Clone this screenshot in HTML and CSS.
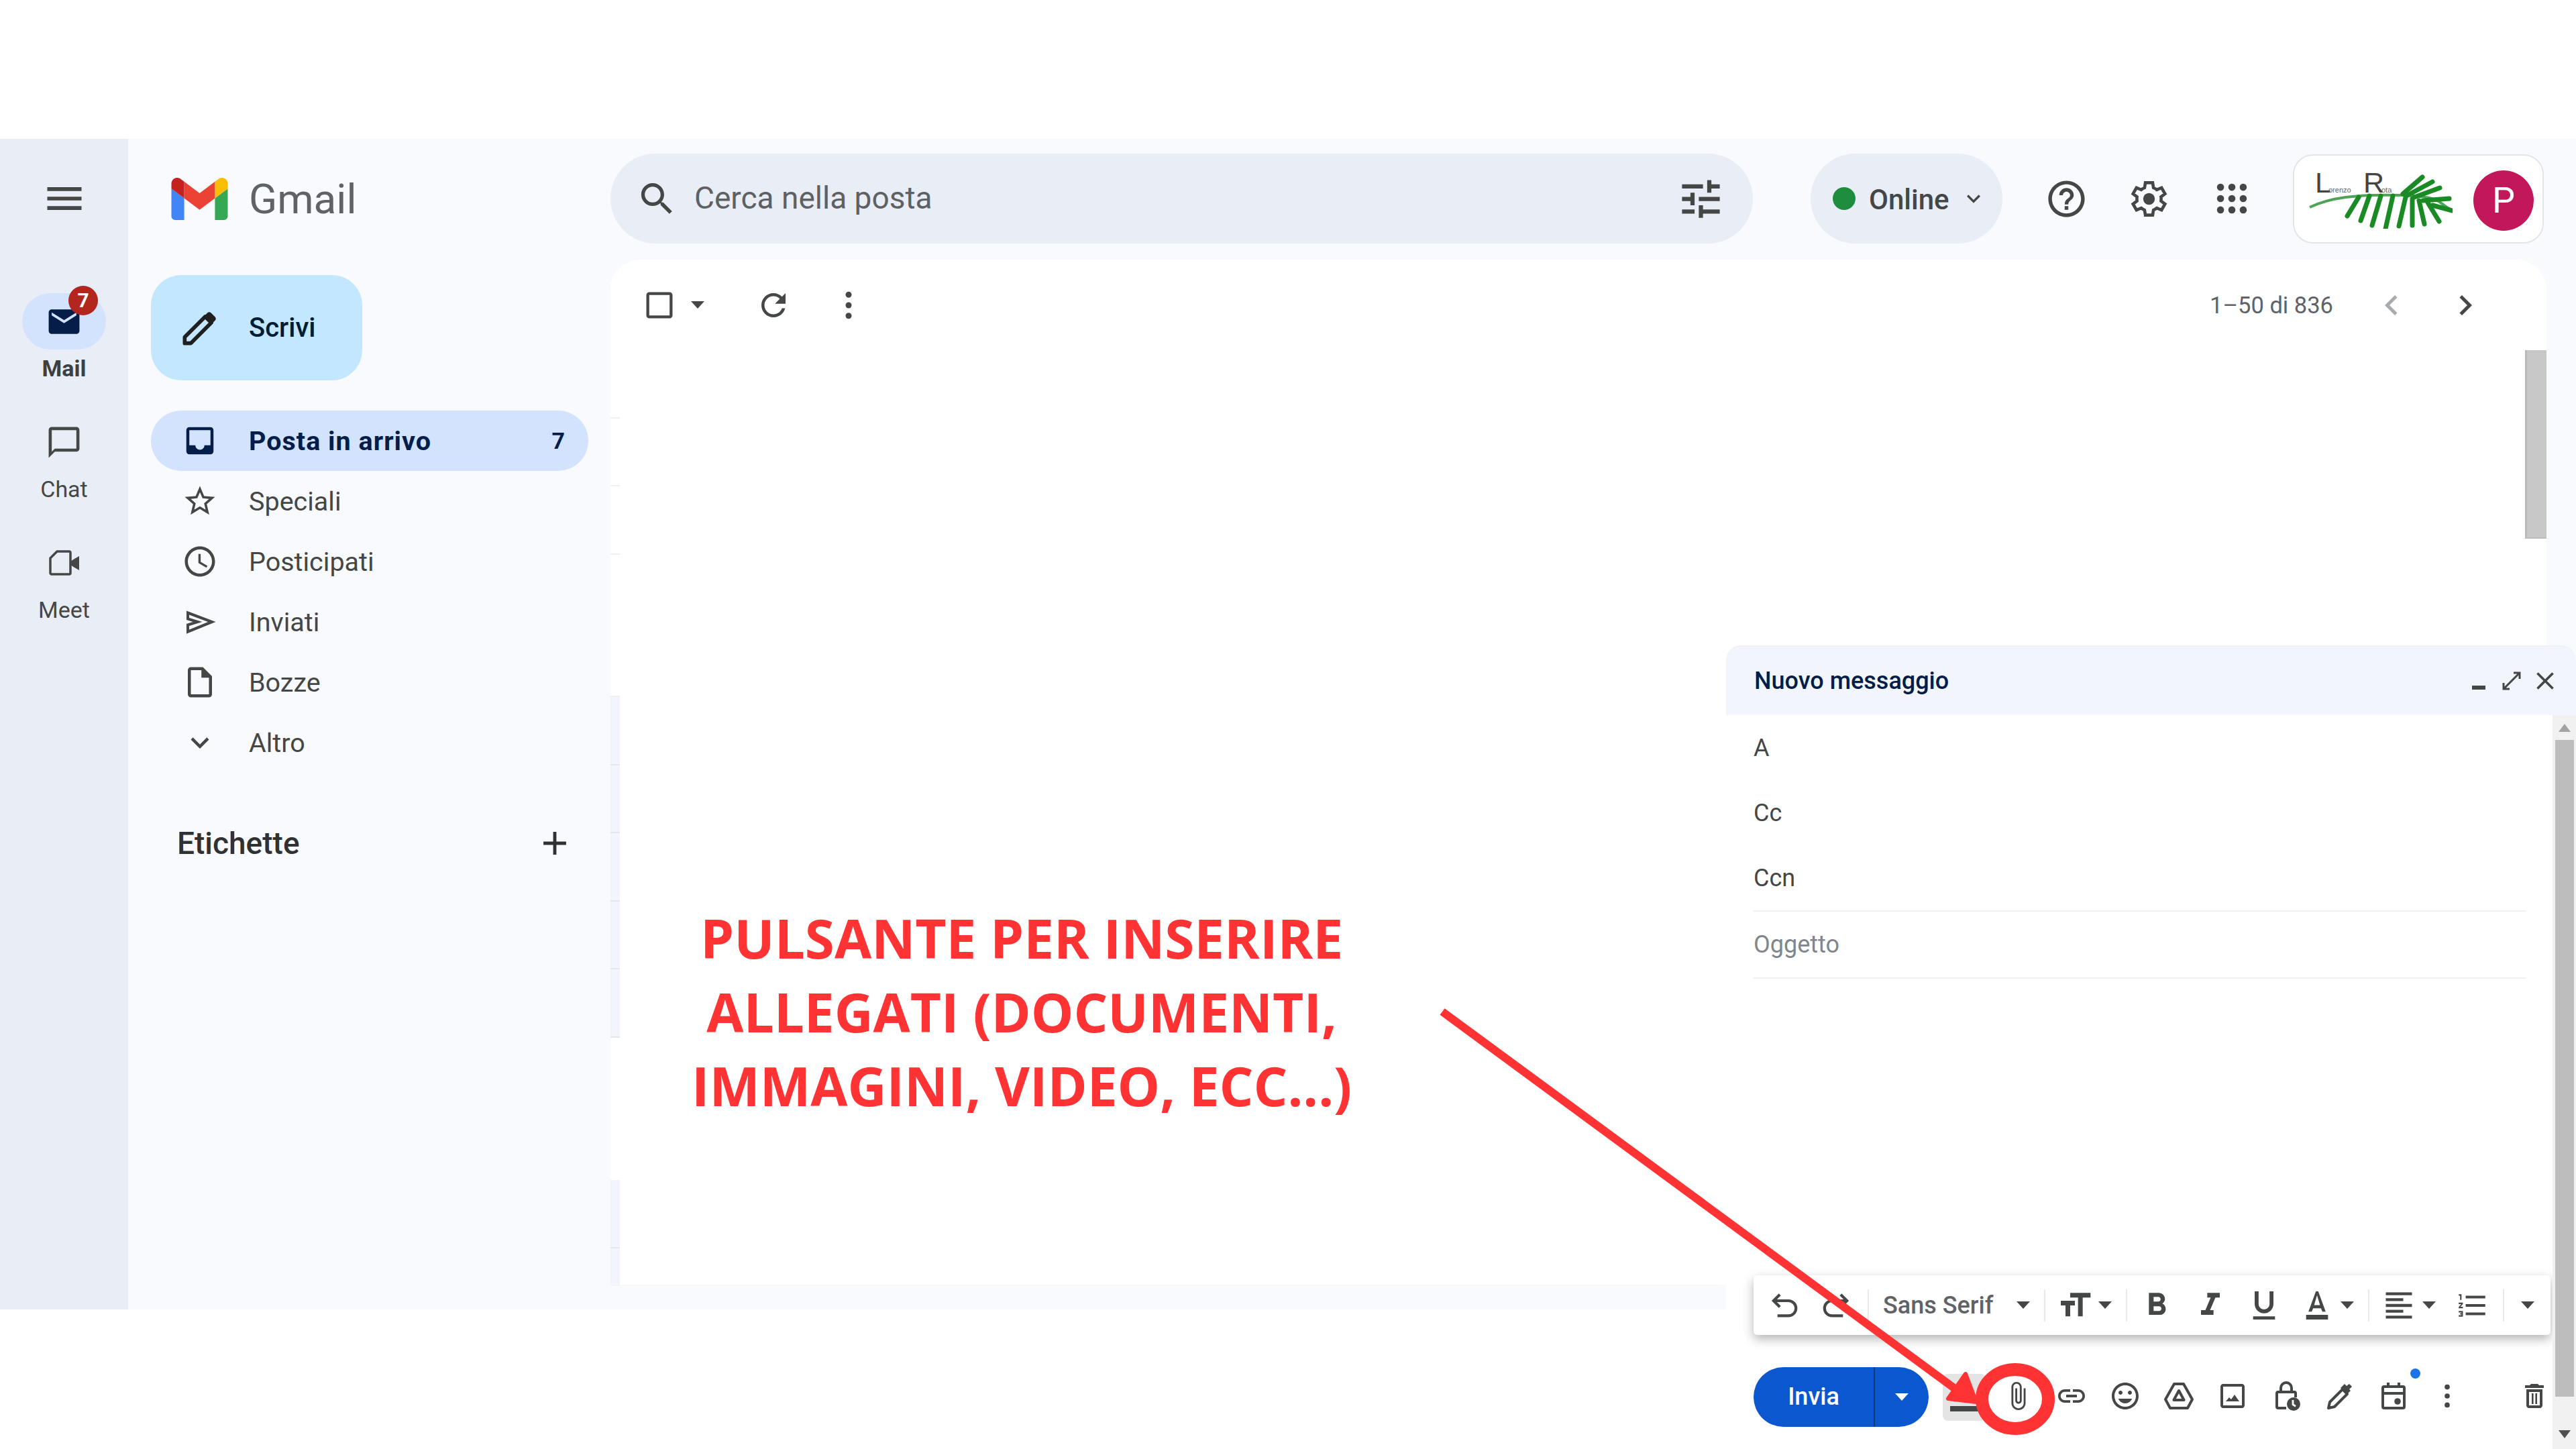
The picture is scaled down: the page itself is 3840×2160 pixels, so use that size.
FILE: index.html
```html
<!DOCTYPE html>
<html lang="it">
<head>
    <meta charset="UTF-8">
    <meta name="viewport" content="width=device-width, initial-scale=1.0">
    <title>Gmail</title>
    <link rel="stylesheet" href="styles.css">
</head>
<body>
<svg class="defs" xmlns="http://www.w3.org/2000/svg">
    <symbol id="ic-menu" viewBox="0 0 24 24"><path d="M3 18h18v-2H3v2zm0-5h18v-2H3v2zm0-7v2h18V6H3z"/></symbol>
    <symbol id="ic-mail" viewBox="0 0 24 24"><path d="M20 4H4c-1.1 0-2 .9-2 2v12c0 1.1.9 2 2 2h16c1.1 0 2-.9 2-2V6c0-1.1-.9-2-2-2zm0 4l-8 5-8-5V6l8 5 8-5v2z"/></symbol>
    <symbol id="ic-chat" viewBox="0 0 24 24"><path d="M20 2H4c-1.1 0-2 .9-2 2v18l4-4h14c1.1 0 2-.9 2-2V4c0-1.1-.9-2-2-2zm0 14H6l-2 2V4h16v12z"/></symbol>
    <symbol id="ic-meet" viewBox="0 0 46 38"><path fill="none" stroke="currentColor" stroke-width="3.500" stroke-linejoin="round" d="M12 2H30a2 2 0 0 1 2 2V34a2 2 0 0 1-2 2H4a2 2 0 0 1-2-2V12z"/><path d="M32 17l6-4 7-4V30l-7-4-6-4z"/></symbol>
    <symbol id="ic-edit" viewBox="0 0 24 24"><path fill="none" stroke="currentColor" stroke-width="2" stroke-linejoin="round" d="M4 20v-3.200L14.800 6l3.200 3.200L7.200 20z"/><path d="M13.800 6.200 16 4c.5-.5 1.300-.5 1.800 0l2.200 2.200c.5.5.5 1.300 0 1.800l-2.200 2.200z"/></symbol>
    <symbol id="ic-inbox" viewBox="0 0 24 24"><path d="M19 3H5c-1.1 0-2 .9-2 2v14c0 1.1.9 2 2 2h14c1.1 0 2-.9 2-2V5c0-1.1-.9-2-2-2zm0 12h-4c0 1.66-1.34 3-3 3s-3-1.34-3-3H5V5h14v10z"/></symbol>
    <symbol id="ic-star" viewBox="0 0 24 24"><path d="M22 9.24l-7.19-.62L12 2 9.19 8.63 2 9.24l5.46 4.73L5.82 21 12 17.27 18.18 21l-1.63-7.03L22 9.24zM12 15.4l-3.76 2.27 1-4.28-3.32-2.88 4.38-.38L12 6.1l1.71 4.04 4.38.38-3.32 2.88 1 4.28L12 15.4z"/></symbol>
    <symbol id="ic-clock" viewBox="0 0 24 24"><path d="M11.99 2C6.47 2 2 6.48 2 12s4.47 10 9.99 10C17.52 22 22 17.52 22 12S17.52 2 11.99 2zM12 20c-4.42 0-8-3.58-8-8s3.58-8 8-8 8 3.58 8 8-3.58 8-8 8zm.5-13H11v6l5.25 3.15.75-1.23-4.5-2.67z"/></symbol>
    <symbol id="ic-send" viewBox="0 0 24 24"><path fill="none" stroke="currentColor" stroke-width="1.800" stroke-linejoin="miter" d="M4 6 20 12 4 18.500V14L10.500 12 4 10z"/></symbol>
    <symbol id="ic-draft" viewBox="0 0 24 24"><path d="M6 2c-1.1 0-2 .9-2 2v16c0 1.1.9 2 2 2h12c1.1 0 2-.9 2-2V8l-6-6H6zm0 18V4h7v5h5v11H6z"/></symbol>
    <symbol id="ic-down" viewBox="0 0 24 24"><path d="M16.59 8.59L12 13.17 7.41 8.59 6 10l6 6 6-6z"/></symbol>
    <symbol id="ic-plus" viewBox="0 0 24 24"><path d="M19 13h-6v6h-2v-6H5v-2h6V5h2v6h6v2z"/></symbol>
    <symbol id="ic-search" viewBox="0 0 24 24"><path d="M15.5 14h-.79l-.28-.27C15.41 12.59 16 11.11 16 9.5 16 5.91 13.09 3 9.5 3S3 5.91 3 9.5 5.91 16 9.5 16c1.61 0 3.09-.59 4.23-1.57l.27.28v.79l5 4.99L20.49 19l-4.99-5zm-6 0C7.01 14 5 11.99 5 9.5S7.01 5 9.5 5 14 7.01 14 9.5 11.99 14 9.5 14z"/></symbol>
    <symbol id="ic-tune" viewBox="0 0 24 24"><path d="M3 17v2h6v-2H3zM3 5v2h10V5H3zm10 16v-2h8v-2h-8v-2h-2v6h2zM7 9v2H3v2h4v2h2V9H7zm14 4v-2H11v2h10zm-6-4h2V7h4V5h-4V3h-2v6z"/></symbol>
    <symbol id="ic-help" viewBox="0 0 24 24"><path d="M11 18h2v-2h-2v2zm1-16C6.48 2 2 6.48 2 12s4.48 10 10 10 10-4.48 10-10S17.52 2 12 2zm0 18c-4.41 0-8-3.59-8-8s3.59-8 8-8 8 3.59 8 8-3.59 8-8 8zm0-14c-2.21 0-4 1.79-4 4h2c0-1.1.9-2 2-2s2 .9 2 2c0 2-3 1.75-3 5h2c0-2.25 3-2.5 3-5 0-2.21-1.79-4-4-4z"/></symbol>
    <symbol id="ic-gear" viewBox="0 0 24 24"><path fill="none" stroke="currentColor" stroke-width="1.700" d="M18.6 13.1c.05-.35.08-.72.08-1.1s-.03-.75-.08-1.1l2.2-1.7-1.9-3.3-2.6 1.05c-.55-.43-1.17-.8-1.85-1.07L14 3.1h-4l-.45 2.78c-.68.27-1.3.64-1.85 1.07L5.1 5.9 3.2 9.2l2.2 1.7c-.05.35-.08.72-.08 1.1s.03.75.08 1.1l-2.2 1.7 1.9 3.3 2.6-1.05c.55.43 1.17.8 1.85 1.07L10 20.9h4l.45-2.78c.68-.27 1.3-.64 1.85-1.07l2.6 1.05 1.9-3.3z"/><circle cx="12" cy="12" r="3.200"/></symbol>
    <symbol id="ic-apps" viewBox="0 0 24 24"><circle cx="5" cy="5" r="2.200"/><circle cx="12" cy="5" r="2.200"/><circle cx="19" cy="5" r="2.200"/><circle cx="5" cy="12" r="2.200"/><circle cx="12" cy="12" r="2.200"/><circle cx="19" cy="12" r="2.200"/><circle cx="5" cy="19" r="2.200"/><circle cx="12" cy="19" r="2.200"/><circle cx="19" cy="19" r="2.200"/></symbol>
    <symbol id="ic-box" viewBox="0 0 24 24"><path d="M19 5v14H5V5h14m0-2H5c-1.1 0-2 .9-2 2v14c0 1.1.9 2 2 2h14c1.1 0 2-.9 2-2V5c0-1.1-.9-2-2-2z"/></symbol>
    <symbol id="ic-refresh" viewBox="0 0 24 24"><path d="M17.65 6.35C16.2 4.9 14.21 4 12 4c-4.42 0-7.99 3.58-7.99 8s3.57 8 7.99 8c3.73 0 6.84-2.55 7.73-6h-2.08c-.82 2.33-3.04 4-5.65 4-3.31 0-6-2.69-6-6s2.69-6 6-6c1.66 0 3.14.69 4.22 1.78L13 11h7V4l-2.35 2.35z"/></symbol>
    <symbol id="ic-kebab" viewBox="0 0 24 24"><circle cx="12" cy="5" r="2"/><circle cx="12" cy="12" r="2"/><circle cx="12" cy="19" r="2"/></symbol>
    <symbol id="ic-prev" viewBox="0 0 24 24"><path d="M15.41 7.41L14 6l-6 6 6 6 1.41-1.41L10.83 12z"/></symbol>
    <symbol id="ic-next" viewBox="0 0 24 24"><path d="M10 6L8.59 7.41 13.17 12l-4.58 4.59L10 18l6-6z"/></symbol>
    <symbol id="ic-undo" viewBox="0 0 24 24"><path fill="none" stroke="currentColor" stroke-width="1.800" d="M9.500 5 5.500 9l4 4M5.500 9H15a4.800 4.800 0 0 1 0 9.600H8"/></symbol>
    <symbol id="ic-redo" viewBox="0 0 24 24"><path fill="none" stroke="currentColor" stroke-width="1.800" d="M14.500 5 18.500 9l-4 4M18.500 9H9a4.800 4.800 0 0 0 0 9.600H16"/></symbol>
    <symbol id="ic-size" viewBox="0 0 24 24"><path d="M9 4v3h5v12h3V7h5V4H9zm-6 8h3v7h3v-7h3V9H3v3z"/></symbol>
    <symbol id="ic-bold" viewBox="0 0 24 24"><path d="M15.6 10.79c.97-.67 1.65-1.77 1.65-2.79 0-2.26-1.75-4-4-4H7v14h7.04c2.09 0 3.71-1.7 3.71-3.79 0-1.52-.86-2.82-2.15-3.42zM10 6.5h3c.83 0 1.5.67 1.5 1.5s-.67 1.5-1.5 1.5h-3v-3zm3.5 9H10v-3h3.5c.83 0 1.5.67 1.5 1.5s-.67 1.5-1.5 1.5z"/></symbol>
    <symbol id="ic-italic" viewBox="0 0 24 24"><path d="M10 4v3h2.21l-3.42 8H6v3h8v-3h-2.21l3.42-8H18V4z"/></symbol>
    <symbol id="ic-under" viewBox="0 0 24 24"><path d="M12 17c3.31 0 6-2.69 6-6V3h-2.5v8c0 1.93-1.57 3.5-3.5 3.5S8.5 12.93 8.5 11V3H6v8c0 3.31 2.69 6 6 6zm-7 2v2h14v-2H5z"/></symbol>
    <symbol id="ic-color" viewBox="0 0 24 24"><path d="M5 18v3h14v-3H5zm4.5-4.2h5l.9 2.2h2.1L12.75 3h-1.5L6.5 16h2.1l.9-2.2zM12 5.5l1.87 6.3h-3.74L12 5.5z"/></symbol>
    <symbol id="ic-align" viewBox="0 0 24 24"><path d="M15 15H3v2h12v-2zm0-8H3v2h12V7zM3 13h18v-2H3v2zm0 8h18v-2H3v2zM3 3v2h18V3H3z"/></symbol>
    <symbol id="ic-numbers" viewBox="0 0 24 24"><path d="M2 17h2v.5H3v1h1v.5H2v1h3v-4H2v1zm1-9h1V4H2v1h1v3zm-1 3h1.8L2 13.1v.9h3v-1H3.2L5 10.9V10H2v1zm5-6v2h14V5H7zm0 14h14v-2H7v2zm0-6h14v-2H7v2z"/></symbol>
    <symbol id="ic-attach" viewBox="0 0 24 24"><path d="M16.5 6v11.5c0 2.21-1.79 4-4 4s-4-1.79-4-4V5c0-1.38 1.12-2.5 2.5-2.5s2.5 1.12 2.5 2.5v10.5c0 .55-.45 1-1 1s-1-.45-1-1V6H10v9.5c0 1.38 1.12 2.5 2.5 2.5s2.5-1.12 2.5-2.5V5c0-2.21-1.79-4-4-4S7 2.79 7 5v12.5c0 3.04 2.46 5.5 5.5 5.5s5.5-2.46 5.5-5.5V6h-1.5z"/></symbol>
    <symbol id="ic-link" viewBox="0 0 24 24"><path d="M3.9 12c0-1.71 1.39-3.1 3.1-3.1h4V7H7c-2.76 0-5 2.24-5 5s2.24 5 5 5h4v-1.9H7c-1.71 0-3.1-1.39-3.1-3.1zM8 13h8v-2H8v2zm9-6h-4v1.9h4c1.71 0 3.1 1.39 3.1 3.1s-1.39 3.1-3.1 3.1h-4V17h4c2.76 0 5-2.24 5-5s-2.24-5-5-5z"/></symbol>
    <symbol id="ic-emoji" viewBox="0 0 24 24"><path d="M11.99 2C6.47 2 2 6.48 2 12s4.47 10 9.99 10C17.52 22 22 17.52 22 12S17.52 2 11.99 2zM12 20c-4.42 0-8-3.58-8-8s3.58-8 8-8 8 3.58 8 8-3.58 8-8 8zm3.5-9c.83 0 1.5-.67 1.5-1.5S16.33 8 15.5 8 14 8.67 14 9.5s.67 1.5 1.5 1.5zm-7 0c.83 0 1.5-.67 1.5-1.5S9.33 8 8.5 8 7 8.67 7 9.5 7.67 11 8.5 11zm3.5 6.5c2.33 0 4.31-1.46 5.11-3.5H6.89c.8 2.04 2.78 3.5 5.11 3.5z"/></symbol>
    <symbol id="ic-drive" viewBox="0 0 24 24"><path fill="none" stroke="currentColor" stroke-width="2" stroke-linejoin="round" d="M8.5 3h7L22 14.5 18.5 21h-13L2 14.5z"/><path fill="none" stroke="currentColor" stroke-width="2" stroke-linejoin="round" d="M12 8l3.8 7H8.2z"/></symbol>
    <symbol id="ic-photo" viewBox="0 0 24 24"><path d="M19 5v14H5V5h14m0-2H5c-1.1 0-2 .9-2 2v14c0 1.1.9 2 2 2h14c1.1 0 2-.9 2-2V5c0-1.1-.9-2-2-2z"/><path d="M7 16l2.5-3 1.5 1.5 2.5-3.5 3.5 5z"/></symbol>
    <symbol id="ic-lock" viewBox="0 0 24 24"><path fill="none" stroke="currentColor" stroke-width="2" d="M8 9V6a4 4 0 0 1 8 0v3M12 21H6a1 1 0 0 1-1-1V10a1 1 0 0 1 1-1h12a1 1 0 0 1 1 1v3"/><circle cx="17.5" cy="18" r="5"/><path fill="none" stroke="#fff" stroke-width="1.4" d="M17 15v3.4l2 1.2"/></symbol>
    <symbol id="ic-pen" viewBox="0 0 24 24"><path fill="none" stroke="currentColor" stroke-width="2" stroke-linejoin="round" d="M3.5 21l1-4.5L14 7l3.5 3.5L8 20z"/><path d="M12.5 6l3-3 1.5 1.5L19 3l2 2-2 2 1 1-3 3z"/></symbol>
    <symbol id="ic-cal" viewBox="0 0 24 24"><path fill="none" stroke="currentColor" stroke-width="2" d="M5 5h14a1 1 0 0 1 1 1v14a1 1 0 0 1-1 1H5a1 1 0 0 1-1-1V6a1 1 0 0 1 1-1zM4 10h16M8 2v3M16 2v3"/><circle cx="15" cy="16" r="2.4"/></symbol>
    <symbol id="ic-trash" viewBox="0 0 24 24"><path d="M16 9v10H8V9h8m-1.500-6h-5l-1 1H5v2h14V4h-3.500l-1-1zM18 7H6v12c0 1.100.9 2 2 2h8c1.100 0 2-.9 2-2V7z"/><path d="M10 10h1.300v8H10zM12.700 10H14v8h-1.300z"/></symbol>
</svg>

<div class="page">
    <div class="top-gap"></div>

    <div class="app">
        <nav class="rail">
            <svg class="i rail-menu"><use href="#ic-menu"/></svg>
            <div class="rail-item rail-active">
                <div class="rail-pill">
                    <svg class="i s55"><use href="#ic-mail"/></svg>
                    <span class="rail-badge">7</span>
                </div>
                <span class="rail-label">Mail</span>
            </div>
            <div class="rail-item">
                <div class="rail-pill">
                    <svg class="i s55"><use href="#ic-chat"/></svg>
                </div>
                <span class="rail-label">Chat</span>
            </div>
            <div class="rail-item">
                <div class="rail-pill">
                    <svg class="i meet-icon"><use href="#ic-meet"/></svg>
                </div>
                <span class="rail-label">Meet</span>
            </div>
        </nav>

        <div class="shell">
            <header class="header">
                <div class="brand">
                    <svg class="gmail-logo" viewBox="52 42 88 66">
                        <path fill="#4285f4" d="M58 108h14V74L52 59v43c0 3.320 2.690 6 6 6"/>
                        <path fill="#34a853" d="M120 108h14c3.320 0 6-2.690 6-6V59l-20 15"/>
                        <path fill="#fbbc04" d="M120 48v26l20-15v-8c0-7.420-8.470-11.650-14.400-7.200"/>
                        <path fill="#ea4335" d="M72 74V48l24 18 24-18v26L96 92"/>
                        <path fill="#c5221f" d="M52 51v8l20 15V48l-5.600-4.200c-5.940-4.450-14.400-.22-14.400 7.200"/>
                    </svg>
                    <span class="gmail-name">Gmail</span>
                </div>
                <div class="search">
                    <svg class="i s63"><use href="#ic-search"/></svg>
                    <span class="search-text">Cerca nella posta</span>
                    <svg class="i s75 search-tune"><use href="#ic-tune"/></svg>
                </div>
                <div class="status">
                    <span class="status-dot"></span>
                    <span class="status-text">Online</span>
                    <svg class="i s40"><use href="#ic-down"/></svg>
                </div>
                <div class="head-icon"><svg class="i s65"><use href="#ic-help"/></svg></div>
                <div class="head-icon"><svg class="i s65"><use href="#ic-gear"/></svg></div>
                <div class="head-icon"><svg class="i s58"><use href="#ic-apps"/></svg></div>
                <div class="account">
                    <svg class="org-logo" viewBox="0 -8 214 92">
                        <text class="org-big" x="9" y="30">L</text>
                        <text class="org-small" x="29" y="30">orenzo</text>
                        <text class="org-big" x="81" y="30">R</text>
                        <text class="org-small" x="108" y="30">ota</text>
                        <path class="leaf-stem" d="M1 52C30 38 70 32 137 34S190 46 214 57"/>
                        <g class="leaf">
                            <path d="M74 37 57 65"/><path d="M90 35 77 72"/><path d="M107 35 94 79"/>
                            <path d="M125 35 114 84"/><path d="M144 37 134 80"/><path d="M154 39 154 79"/>
                            <path d="M164 42 172 77"/><path d="M177 45 194 73"/><path d="M184 49 214 57"/>
                            <path d="M170 42 209 39"/><path d="M157 37 195 23"/><path d="M147 34 184 14"/>
                            <path d="M140 32 169 7"/>
                        </g>
                    </svg>
                    <div class="avatar">P</div>
                </div>
            </header>

            <div class="columns">
                <aside class="sidebar">
                    <div class="compose-btn">
                        <svg class="i s68"><use href="#ic-edit"/></svg>
                        <span>Scrivi</span>
                    </div>
                    <ul class="nav">
                        <li class="nav-row nav-active">
                            <svg class="i s54"><use href="#ic-inbox"/></svg>
                            <span class="nav-text">Posta in arrivo</span>
                            <span class="nav-count">7</span>
                        </li>
                        <li class="nav-row"><svg class="i s54"><use href="#ic-star"/></svg><span class="nav-text">Speciali</span></li>
                        <li class="nav-row"><svg class="i s54"><use href="#ic-clock"/></svg><span class="nav-text">Posticipati</span></li>
                        <li class="nav-row"><svg class="i s54"><use href="#ic-send"/></svg><span class="nav-text">Inviati</span></li>
                        <li class="nav-row"><svg class="i s54"><use href="#ic-draft"/></svg><span class="nav-text">Bozze</span></li>
                        <li class="nav-row"><svg class="i s54"><use href="#ic-down"/></svg><span class="nav-text">Altro</span></li>
                    </ul>
                    <div class="labels-head">
                        <span>Etichette</span>
                        <svg class="i s58"><use href="#ic-plus"/></svg>
                    </div>
                </aside>

                <main class="card">
                    <div class="list-bar">
                        <svg class="i s52"><use href="#ic-box"/></svg>
                        <span class="caret caret-box"></span>
                        <svg class="i s54 bar-refresh"><use href="#ic-refresh"/></svg>
                        <svg class="i s54 bar-more"><use href="#ic-kebab"/></svg>
                        <span class="pager">1–50 di 836</span>
                        <svg class="i s60 pager-off"><use href="#ic-prev"/></svg>
                        <svg class="i s60 pager-next"><use href="#ic-next"/></svg>
                    </div>
                    <div class="list-body">
                        <div class="stubs">
                            <div class="stub"></div>
                            <div class="stub"></div>
                            <div class="stub"></div>
                            <div class="stub stub-tall"></div>
                            <div class="stub stub-read"></div>
                            <div class="stub stub-read"></div>
                            <div class="stub stub-read"></div>
                            <div class="stub stub-read"></div>
                            <div class="stub stub-read"></div>
                            <div class="stub stub-tall stub-plain"></div>
                            <div class="stub stub-read"></div>
                            <div class="stub stub-read stub-plain"></div>
                        </div>
                        <div class="list-thumb"></div>
                    </div>
                </main>
            </div>
        </div>
    </div>

    <section class="compose">
        <div class="compose-head">
            <span class="compose-title">Nuovo messaggio</span>
            <span class="head-min"></span>
            <svg class="i s36 head-expand" viewBox="0 0 24 24"><path d="M14 3h7v7h-2V6.400L6.400 19H10v2H3v-7h2v3.600L17.600 5H14z"/></svg>
            <svg class="i s44" viewBox="0 0 24 24"><path d="M19 6.410 17.590 5 12 10.590 6.410 5 5 6.410 10.590 12 5 17.590 6.410 19 12 13.410 17.590 19 19 17.590 13.410 12z"/></svg>
        </div>
        <div class="compose-main">
            <div class="compose-body">
                <div class="field">A</div>
                <div class="field">Cc</div>
                <div class="field field-line">Ccn</div>
                <div class="field field-line field-subject">Oggetto</div>
                <div class="compose-fill"></div>

                <div class="format-bar">
                    <svg class="i s56"><use href="#ic-undo"/></svg>
                    <svg class="i s56"><use href="#ic-redo"/></svg>
                    <span class="sep"></span>
                    <span class="font-name">Sans Serif</span>
                    <span class="caret"></span>
                    <span class="sep"></span>
                    <svg class="i s56"><use href="#ic-size"/></svg>
                    <span class="caret"></span>
                    <span class="sep"></span>
                    <svg class="i s56"><use href="#ic-bold"/></svg>
                    <svg class="i s56"><use href="#ic-italic"/></svg>
                    <svg class="i s56"><use href="#ic-under"/></svg>
                    <svg class="i s56"><use href="#ic-color"/></svg>
                    <span class="caret"></span>
                    <span class="sep"></span>
                    <svg class="i s52"><use href="#ic-align"/></svg>
                    <span class="caret"></span>
                    <svg class="i s50"><use href="#ic-numbers"/></svg>
                    <span class="sep"></span>
                    <span class="caret"></span>
                </div>

                <div class="action-row">
                    <div class="send">
                        <span class="send-label">Invia</span>
                        <span class="send-more"><span class="caret caret-white"></span></span>
                    </div>
                    <div class="format-toggle"><span class="toggle-bar"></span></div>
                    <div class="act"><svg class="i s46"><use href="#ic-attach"/></svg></div>
                    <div class="act"><svg class="i s48"><use href="#ic-link"/></svg></div>
                    <div class="act"><svg class="i s48"><use href="#ic-emoji"/></svg></div>
                    <div class="act"><svg class="i s48"><use href="#ic-drive"/></svg></div>
                    <div class="act"><svg class="i s48"><use href="#ic-photo"/></svg></div>
                    <div class="act"><svg class="i s48"><use href="#ic-lock"/></svg></div>
                    <div class="act"><svg class="i s48"><use href="#ic-pen"/></svg></div>
                    <div class="act act-dot"><svg class="i s48"><use href="#ic-cal"/></svg></div>
                    <div class="act"><svg class="i s46"><use href="#ic-kebab"/></svg></div>
                    <div class="act act-trash"><svg class="i s48"><use href="#ic-trash"/></svg></div>
                </div>
            </div>
            <div class="compose-scroll">
                <span class="arrow-up"></span>
                <div class="scroll-thumb"></div>
                <span class="arrow-down"></span>
            </div>
        </div>
    </section>

    <!-- annotazione sopra lo screenshot -->
    <div class="note">PULSANTE PER INSERIRE<br>ALLEGATI (DOCUMENTI,<br>IMMAGINI, VIDEO, ECC...)</div>
    <svg class="marks" viewBox="0 0 3840 2160">
        <path class="mark-line" d="M2150 1508 2925 2078"/>
        <path class="mark-head" d="M2930 2048 2904 2085 2946 2090z"/>
        <ellipse class="mark-ring" cx="3004" cy="2085.500" rx="49.500" ry="44"/>
    </svg>
</div>
</body>
</html>
```

FILE: styles.css
```css
* {
    box-sizing: border-box;
}
body {
    margin: 0;
    background: #fff;
    font-family: Roboto, "Liberation Sans", sans-serif;
    color: #444746;
}
ul {
    list-style: none;
    margin: 0;
    padding: 0;
}
.defs {
    display: none;
}
.page {
    position: relative;
    width: 3840px;
    height: 2160px;
    overflow: hidden;
}
.top-gap {
    height: 207px;
}

/* icons */
.i {
    flex: none;
    display: block;
    fill: currentColor;
}
.s36 { width: 36px; height: 36px; }
.s40 { width: 40px; height: 40px; }
.s44 { width: 44px; height: 44px; }
.s46 { width: 46px; height: 46px; }
.s48 { width: 48px; height: 48px; }
.s50 { width: 50px; height: 50px; }
.s52 { width: 52px; height: 52px; }
.s54 { width: 54px; height: 54px; }
.s55 { width: 55px; height: 55px; }
.s56 { width: 56px; height: 56px; }
.s58 { width: 58px; height: 58px; }
.s60 { width: 60px; height: 60px; }
.s63 { width: 63px; height: 63px; }
.s65 { width: 65px; height: 65px; }
.s68 { width: 68px; height: 68px; }
.s75 { width: 75px; height: 75px; }

.caret {
    display: block;
    width: 0;
    height: 0;
    border-left: 10px solid transparent;
    border-right: 10px solid transparent;
    border-top: 11px solid #444746;
}
.caret-white {
    border-top-color: #fff;
}

.app {
    display: flex;
    height: 1745px;
    background: #f8fafd;
}

/* left rail */
.rail {
    width: 191px;
    flex: none;
    background: #e9eef6;
    display: flex;
    flex-direction: column;
    align-items: center;
}
.rail-menu {
    width: 68px;
    height: 68px;
    margin-top: 55px;
    margin-bottom: 107px;
}
.rail-item {
    display: flex;
    flex-direction: column;
    align-items: center;
    height: 180px;
}
.rail-pill {
    position: relative;
    width: 125px;
    height: 84px;
    border-radius: 42px;
    display: flex;
    align-items: center;
    justify-content: center;
}
.rail-active .rail-pill {
    background: #d3e3fd;
    color: #041e49;
}
.meet-icon {
    width: 46px;
    height: 38px;
}
.rail-badge {
    position: absolute;
    top: -11px;
    left: 69px;
    width: 44px;
    height: 44px;
    border-radius: 50%;
    background: #b3261e;
    color: #fff;
    font-size: 30px;
    font-weight: 700;
    line-height: 44px;
    text-align: center;
}
.rail-label {
    margin-top: 6px;
    font-size: 34px;
    line-height: 44px;
}
.rail-active .rail-label {
    font-weight: 700;
    color: #3c4043;
}

.shell {
    flex: 1;
    display: flex;
    flex-direction: column;
    min-width: 0;
}

/* header */
.header {
    height: 180px;
    flex: none;
    display: flex;
    align-items: flex-start;
    padding-top: 22px;
}
.brand {
    width: 719px;
    height: 134px;
    flex: none;
    display: flex;
    align-items: center;
    padding-left: 64px;
    gap: 31px;
}
.gmail-logo {
    width: 85px;
    height: 63px;
}
.gmail-name {
    font-size: 62px;
    color: #5f6368;
}
.search {
    width: 1703px;
    height: 134px;
    flex: none;
    background: #e9eef6;
    border-radius: 67px;
    display: flex;
    align-items: center;
    padding-left: 38px;
    padding-right: 40px;
    gap: 24px;
}
.search-text {
    margin-bottom: 3px;
    font-size: 46px;
    color: #5e6163;
}
.search-tune {
    margin-left: auto;
}
.status {
    margin-left: 86px;
    width: 286px;
    height: 134px;
    flex: none;
    background: #e9eef6;
    border-radius: 67px;
    display: flex;
    align-items: center;
    padding-left: 33px;
}
.status-dot {
    width: 34px;
    height: 34px;
    border-radius: 50%;
    background: #1e8e3e;
}
.status-text {
    margin-top: 3px;
    margin-left: 20px;
    margin-right: 16px;
    font-size: 42px;
    font-weight: 500;
}
.head-icon {
    width: 123px;
    height: 134px;
    flex: none;
    display: flex;
    align-items: center;
    justify-content: center;
}
.status + .head-icon {
    margin-left: 34px;
}
.account {
    margin-top: 1px;
    margin-left: 30px;
    width: 374px;
    height: 133px;
    flex: none;
    background: #fff;
    border: 2px solid #e3e5e8;
    border-radius: 30px;
    display: flex;
    align-items: center;
    padding-left: 22px;
    padding-top: 5px;
}
.org-logo {
    width: 214px;
    height: 92px;
    margin-top: -8px;
    flex: none;
}
.org-big {
    font-family: "Liberation Sans", sans-serif;
    font-size: 43px;
    fill: #444;
}
.org-small {
    font-family: "Liberation Sans", sans-serif;
    font-size: 11px;
    fill: #666;
}
.leaf-stem {
    fill: none;
    stroke: #4fa356;
    stroke-width: 4;
}
.leaf path {
    fill: none;
    stroke: #1a8a25;
    stroke-width: 7;
    stroke-linecap: round;
}
.avatar {
    margin-left: 31px;
    width: 90px;
    height: 90px;
    border-radius: 50%;
    background: #c2185b;
    color: #fff;
    font-size: 54px;
    line-height: 90px;
    text-align: center;
}

.columns {
    flex: 1;
    display: flex;
    min-height: 0;
}

/* sidebar */
.sidebar {
    width: 719px;
    flex: none;
    padding-left: 34px;
    padding-top: 23px;
}
.compose-btn {
    width: 315px;
    height: 157px;
    background: #c2e7ff;
    border-radius: 45px;
    display: flex;
    align-items: center;
    padding-left: 39px;
    gap: 39px;
    font-size: 40px;
    font-weight: 500;
    color: #001d35;
}
.compose-btn .i {
    color: #1f1f1f;
}
.nav {
    margin-top: 45px;
    width: 652px;
}
.nav-row {
    height: 90px;
    display: flex;
    align-items: center;
    padding-left: 46px;
    padding-right: 35px;
    border-radius: 45px;
    font-size: 39.500px;
    color: #444746;
}
.nav-text {
    margin-left: 46px;
}
.nav-active {
    background: #d3e3fd;
    color: #041e49;
    font-weight: 700;
}
.nav-active .nav-text {
    letter-spacing: 1px;
}
.nav-count {
    margin-left: auto;
    font-size: 34px;
}
.labels-head {
    width: 652px;
    height: 90px;
    margin-top: 60px;
    display: flex;
    align-items: center;
    justify-content: space-between;
    padding-left: 39px;
    padding-right: 21px;
    font-size: 46px;
    font-weight: 500;
    color: #303133;
}

/* message list */
.card {
    flex: 1;
    margin-right: 44px;
    margin-bottom: 37px;
    background: #fff;
    border-radius: 45px 45px 0 0;
    display: flex;
    flex-direction: column;
}
.list-bar {
    height: 135px;
    flex: none;
    display: flex;
    align-items: center;
    padding-left: 47px;
    padding-right: 91px;
}
.caret-box {
    margin-left: 21px;
}
.bar-refresh {
    margin-left: 76px;
}
.bar-more {
    margin-left: 58px;
}
.pager {
    margin-left: auto;
    margin-right: 57px;
    font-size: 34.500px;
    color: #5f6368;
}
.pager-off {
    color: #a9acaf;
}
.pager-next {
    margin-left: 50px;
}
.list-body {
    flex: 1;
    display: flex;
    justify-content: space-between;
    align-items: flex-start;
}
/* left ends of the message rows that show past the blank list */
.stubs {
    width: 14px;
}
.stub {
    height: 101.500px;
    border-bottom: 2px solid #eff0f2;
}
.stub-tall {
    height: 212.500px;
}
.stub-read {
    background: #f2f6fc;
    border-bottom-color: #e3e6ec;
}
.stub-tall.stub-plain {
    border-bottom: 0;
}
.stub-read.stub-plain {
    height: 56px;
    border-bottom: 0;
}
.list-thumb {
    width: 32px;
    height: 281px;
    background: #c8c8c8;
    border-left: 3px solid #b9b9b9;
    border-bottom: 2px solid #bbb;
}

/* compose window */
.compose {
    position: absolute;
    left: 2573px;
    top: 962px;
    right: 0;
    bottom: 0;
    background: #fff;
    border-radius: 22px 22px 0 0;
    display: flex;
    flex-direction: column;
}
.compose-head {
    height: 104px;
    flex: none;
    background: #f2f6fc;
    border-radius: 22px 22px 0 0;
    border-top: 2px solid #f0f1f3;
    display: flex;
    align-items: center;
    padding-left: 42px;
    padding-right: 24px;
    color: #444746;
}
.compose-title {
    font-size: 36px;
    font-weight: 500;
    color: #041e49;
    margin-right: auto;
}
.head-min {
    width: 20px;
    height: 6px;
    margin-top: 20px;
    background: #444746;
}
.head-expand {
    margin-left: 21px;
    margin-right: 10px;
}
.compose-main {
    flex: 1;
    display: flex;
    min-height: 0;
}
.compose-body {
    flex: 1;
    display: flex;
    flex-direction: column;
    padding-left: 41px;
    padding-right: 3px;
    padding-bottom: 33px;
    min-width: 0;
}
.field {
    height: 97.500px;
    flex: none;
    display: flex;
    align-items: center;
    margin-right: 37px;
    font-size: 36px;
    color: #444746;
}
.field-line {
    border-bottom: 2px solid #eff0f1;
}
.field-subject {
    height: 100px;
    color: #80868b;
}
.compose-fill {
    flex: 1;
}

.format-bar {
    height: 89px;
    flex: none;
    background: #fff;
    border-radius: 5px;
    box-shadow: 0 6px 16px rgba(0, 0, 0, 0.3);
    display: grid;
    grid-template-columns: 80px 78px 16px 218px 10px 54px 36px 54px 10px 80px 80px 80px 78px 12px 52px 38px 52px 78px 14px 58px;
    padding-left: 5px;
    align-items: center;
    justify-items: center;
    color: #444746;
}
.sep {
    width: 2px;
    height: 48px;
    background: #e8e9ea;
}
.font-name {
    justify-self: start;
    padding-left: 14px;
    font-size: 36px;
    font-weight: 500;
    color: #5f6368;
}
.action-row {
    margin-top: 48px;
    height: 89px;
    flex: none;
    display: flex;
    align-items: center;
}
.send {
    width: 261px;
    height: 89px;
    flex: none;
    background: #0b57d0;
    border-radius: 45px;
    display: flex;
    color: #fff;
}
.send-label {
    width: 181px;
    border-right: 2px solid #113a79;
    font-size: 36px;
    font-weight: 500;
    line-height: 89px;
    text-align: center;
}
.send-more {
    flex: 1;
    display: flex;
    align-items: center;
    justify-content: center;
}
.format-toggle {
    margin-left: 21px;
    margin-right: 8px;
    width: 64px;
    height: 70px;
    flex: none;
    background: #e4e4e4;
    border-radius: 8px;
    display: flex;
    align-items: flex-end;
    justify-content: center;
    padding-bottom: 14px;
}
.toggle-bar {
    width: 42px;
    height: 8px;
    background: #444746;
}
.act {
    position: relative;
    width: 80px;
    flex: none;
    margin-top: -3px;
    display: flex;
    justify-content: center;
}
.act-dot::after {
    content: "";
    position: absolute;
    top: -17px;
    right: 0;
    width: 15px;
    height: 15px;
    border-radius: 50%;
    background: #1a73e8;
}
.act-trash {
    width: 48px;
    margin-left: auto;
}
.compose-scroll {
    width: 35px;
    flex: none;
    background: #f1f1f1;
    display: flex;
    flex-direction: column;
    align-items: center;
}
.arrow-up {
    margin-top: 13px;
    border-left: 9px solid transparent;
    border-right: 9px solid transparent;
    border-bottom: 12px solid #a3a3a3;
}
.scroll-thumb {
    margin-top: 12px;
    width: 28px;
    height: 979px;
    background: #bdbdbd;
}
.arrow-down {
    margin-top: 50px;
    border-left: 9px solid transparent;
    border-right: 9px solid transparent;
    border-top: 12px solid #505050;
}

/* red annotation on top of the screenshot */
.note {
    position: absolute;
    left: 923px;
    top: 1343px;
    width: 1200px;
    font-family: "Open Sans", sans-serif;
    font-size: 80px;
    font-weight: 700;
    line-height: 110px;
    text-align: center;
    color: #ff3333;
}
.marks {
    position: absolute;
    left: 0;
    top: 0;
    width: 3840px;
    height: 2160px;
    pointer-events: none;
}
.mark-line {
    fill: none;
    stroke: #ff3333;
    stroke-width: 12;
}
.mark-head {
    fill: #ff3333;
    stroke: #ff3333;
    stroke-width: 6;
    stroke-linejoin: round;
}
.mark-ring {
    fill: none;
    stroke: #ff3333;
    stroke-width: 19;
}
```
